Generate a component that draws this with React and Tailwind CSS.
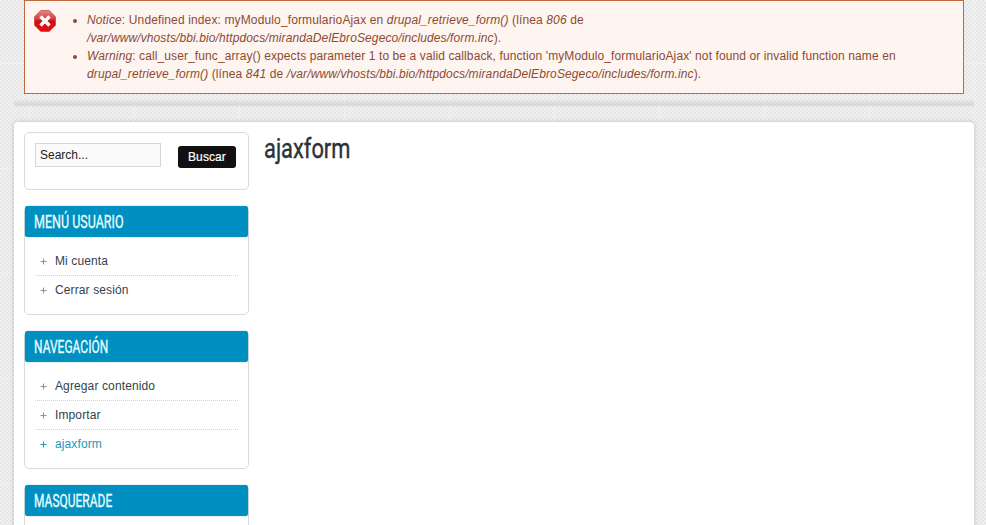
import React from "react";

function ErrorIcon() {
  return (
    <svg width="22" height="22" viewBox="0 0 22 22" className="shrink-0">
      <defs>
        <linearGradient id="stop" x1="0" y1="0" x2="0" y2="1">
          <stop offset="0" stopColor="#e08a86" />
          <stop offset="0.42" stopColor="#d33a38" />
          <stop offset="0.5" stopColor="#cc0f14" />
          <stop offset="1" stopColor="#e80d10" />
        </linearGradient>
      </defs>
      <path d="M6.8.5h8.4l6.3 6.3v8.4l-6.3 6.3H6.8L.5 15.2V6.8z" fill="url(#stop)" stroke="#c93a36" strokeWidth=".7" />
      <path d="M6.5 6.5l9 9M15.5 6.5l-9 9" stroke="#fff" strokeWidth="3.4" />
    </svg>
  );
}

function MenuItem({ label, active, last }) {
  return (
    <li
      className={
        "flex items-center pl-[5px] text-[12px] leading-[18px] tracking-[0.12px] " +
        (active ? "text-[#1c97bd] " : "text-[#33424d] ") +
        (last ? "h-[28px]" : "h-[29px] border-b border-dotted border-[#cfd2d4]")
      }
    >
      <svg width="7" height="7" viewBox="0 0 7 7" className="mr-2 shrink-0">
        <path d="M0.5 3.5h6M3.5 0.5v6" stroke={active ? "#1c97bd" : "#8b9196"} strokeWidth="1" />
      </svg>
      <span>{label}</span>
    </li>
  );
}

function Block({ title, scale, items }) {
  return (
    <section className="rounded-[5px] border border-[#d9dadb] bg-white">
      <h2 className="-mt-px flex h-[31px] items-center rounded-[3px] bg-[#008fc1] pt-[2px] pl-[9px] font-['Roboto',sans-serif] text-[17.5px] leading-none font-normal text-[#e9ffff] shadow-[0_0_1px_#008fc1] [-webkit-text-stroke:0.3px_#e9ffff]">
        <span className={"inline-block origin-left whitespace-nowrap " + scale}>{title}</span>
      </h2>
      <ul className="px-[10px] pt-[10px] pb-[10px]">
        {items.map((item, i) => (
          <MenuItem key={item.label} {...item} last={i === items.length - 1} />
        ))}
      </ul>
    </section>
  );
}

export default function App() {
  return (
    <div className="h-[525px] w-[986px] overflow-hidden bg-[#ececec] bg-[image:linear-gradient(90deg,#f1f1f1_1px,transparent_1px),linear-gradient(#f1f1f1_1px,transparent_1px),conic-gradient(#e6e6e6_25%,#f1f1f1_0_50%,#e6e6e6_0_75%,#f1f1f1_0)] bg-[size:105px_105px,105px_105px,4px_4px] bg-[position:29px_0,0_63px,0_0] pl-[14px] font-['Liberation_Sans',Arial,sans-serif]">
      <div className="h-[107px] w-[960px] bg-[linear-gradient(transparent_99px,#d9d9d9_104px,#d9d9d9_105px,transparent_107px)] px-[10px]">
        <div className="flex h-[94px] w-[940px] border border-[#c0683f] bg-[#fef5f1] pt-[9px] pl-[9px] text-[#8c4a32]">
          <ErrorIcon />
          <ul className="ml-[31px] list-disc pt-px text-[12px] leading-[18px] whitespace-nowrap">
            <li>
              <span className="tracking-[0.135px]">
                <em>Notice</em>: Undefined index: myModulo_formularioAjax en <em>drupal_retrieve_form()</em> (línea <em>806</em> de
              </span>
              <br />
              <span className="tracking-[0.11px]">
                <em>/var/www/vhosts/bbi.bio/httpdocs/mirandaDelEbroSegeco/includes/form.inc</em>).
              </span>
            </li>
            <li>
              <span className="tracking-[0.103px]">
                <em>Warning</em>: call_user_func_array() expects parameter 1 to be a valid callback, function 'myModulo_formularioAjax' not found or invalid function name en
              </span>
              <br />
              <span className="tracking-[0.115px]">
                <em>drupal_retrieve_form()</em> (línea <em>841</em> de <em>/var/www/vhosts/bbi.bio/httpdocs/mirandaDelEbroSegeco/includes/form.inc</em>).
              </span>
            </li>
          </ul>
        </div>
      </div>
      <main className="mt-[15px] flex h-[420px] w-[960px] rounded-[4px] bg-white pt-[10px] pl-[10px] shadow-[0_0_4px_#bbbbbb]">
        <aside className="flex w-[225px] shrink-0 flex-col gap-4">
          <form className="flex h-[58px] shrink-0 rounded-[5px] border border-[#d9dadb] pt-[10px] pl-[10px]">
            <input
              defaultValue="Search..."
              className="h-6 w-[126px] border border-[#d7d7d7] bg-[#fafafa] px-1 text-[12px] text-[#222]"
            />
            <button type="button" className="mt-[3px] ml-[17px] h-[22px] w-[58px] rounded-[3px] bg-[#111] text-[12px] tracking-[0.1px] text-white [-webkit-text-stroke:0.2px_#fff]">
              Buscar
            </button>
          </form>
          <Block
            title="MENÚ USUARIO"
            scale="scale-x-[0.715]"
            items={[{ label: "Mi cuenta" }, { label: "Cerrar sesión" }]}
          />
          <Block
            title="NAVEGACIÓN"
            scale="scale-x-[0.685]"
            items={[{ label: "Agregar contenido" }, { label: "Importar" }, { label: "ajaxform", active: true }]}
          />
          <Block title="MASQUERADE" scale="scale-x-[0.685]" items={[]} />
        </aside>
        <h1 className="ml-[15px] pt-px font-['Roboto',sans-serif] text-[28px] leading-[32px] font-normal text-[#2b3238] [-webkit-text-stroke:0.4px_#2b3238]">
          <span className="inline-block origin-left scale-x-[0.78]">ajaxform</span>
        </h1>
      </main>
    </div>
  );
}
